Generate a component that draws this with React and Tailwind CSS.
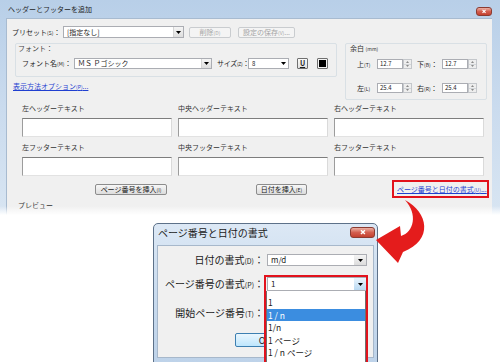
import React from "react";

const Accel = ({ k }) => <span className="text-[5px]">({k})</span>;

const Caret = () => (
  <svg width="5" height="3" viewBox="0 0 5 3">
    <path d="M0 0H5L2.5 3Z" fill="#000" />
  </svg>
);

const CloseButton = ({ className }) => (
  <div
    className={`flex items-center justify-center rounded-[3px] border border-[#8b3b31] bg-gradient-to-b from-[#eab0a4] via-[#d35e4f] to-[#c4402f] ${className}`}
  >
    <svg viewBox="0 0 10 8" className="h-[70%]">
      <path d="M2.5 1.5L7.5 6.5M7.5 1.5L2.5 6.5" stroke="#fff" strokeWidth="1.8" />
    </svg>
  </div>
);

const Button = ({ children, className, disabled }) => (
  <div
    className={`flex items-center justify-center rounded-[2px] border text-[7px] leading-none ${
      disabled
        ? "border-[#c9cccf] bg-[#f4f4f4] text-[#a5a5a5]"
        : "border-[#8c8c8c] bg-gradient-to-b from-[#f7f7f7] to-[#dcdcdc] text-[#1b1b1b]"
    } ${className}`}
  >
    {children}
  </div>
);

const Combo = ({ value, className, textClass = "text-[7px]", arrowClass = "" }) => (
  <div className={`flex items-stretch border border-[#abadb3] bg-white ${className}`}>
    <span className={`flex flex-1 items-center truncate pl-[3px] leading-none ${textClass}`}>
      {value}
    </span>
    <span className={`flex w-[10px] items-center justify-center ${arrowClass}`}>
      <Caret />
    </span>
  </div>
);

const Spinner = () => (
  <div className="flex h-[10px] w-[9px] flex-col border border-[#c4c7cb] bg-[#eeeeee]">
    <div className="flex flex-1 items-center justify-center border-b border-[#d3d6d9]">
      <svg width="3" height="2" viewBox="0 0 3 2">
        <path d="M0 2H3L1.5 0Z" fill="#8a8a8a" />
      </svg>
    </div>
    <div className="flex flex-1 items-center justify-center">
      <svg width="3" height="2" viewBox="0 0 3 2">
        <path d="M0 0H3L1.5 2Z" fill="#8a8a8a" />
      </svg>
    </div>
  </div>
);

const NumberField = ({ value }) => (
  <div className="flex items-center">
    <div className="flex h-[10px] w-[26px] items-center border border-[#abadb3] bg-white pl-[2px] text-[6px] leading-none">
      {value}
    </div>
    <Spinner />
  </div>
);

const TextField = ({ label }) => (
  <div className="flex w-[150px] flex-col">
    <span className="h-[9px] text-[7px] leading-[9px] text-[#333]">{label}</span>
    <div className="mt-[5px] h-[19px] border border-t-[#7d7d7d] border-l-[#9c9c9c] border-r-[#dadada] border-b-[#e2e2e2] bg-white" />
  </div>
);

const MainWindow = () => (
  <div className="relative h-[215px] w-[500px] bg-gradient-to-b from-[#b8cfe8] via-[#cadbee] to-[#d8e5f2]">
    <div className="flex h-[18px] items-start justify-between pl-[8px] pr-[8px]">
      <span className="mt-[5px] text-[7px] leading-[9px] text-[#1e1e1e]">
        ヘッダーとフッターを追加
      </span>
      <CloseButton className="mt-[7px] h-[9px] w-[16px]" />
    </div>

    <div className="ml-[6px] mr-[8px] flex h-[197px] flex-col bg-[#f0f0f0] text-[#1e1e1e] shadow-[inset_1px_1px_0_#a8bbd0]">
      {/* preset */}
      <div className="mt-[8px] flex h-[12px] items-center pl-[6px]">
        <span className="w-[51px] text-[7px] leading-none">
          プリセット<Accel k="S" />：
        </span>
        <Combo
          value="[指定なし]"
          className="h-[12px] w-[121px]"
          arrowClass="bg-gradient-to-b from-[#f5f5f5] to-[#dedede] border-l border-[#d5d5d5]"
        />
        <Button disabled className="ml-[5px] h-[11px] w-[42px]">
          削除<Accel k="D" />
        </Button>
        <Button disabled className="ml-[7px] h-[11px] w-[57px]">
          設定の保存<Accel k="V" />...
        </Button>
      </div>

      {/* font + margins */}
      <div className="mt-[5px] flex pl-[7px]">
        <div className="flex w-[324px] flex-col">
          <div className="ml-[2px] flex h-[34px] w-[322px] flex-col rounded-[2px] border border-[#d9e0e5]">
            <span className="ml-[2px] h-[9px] text-[7px] leading-[9px] text-[#444]">フォント：</span>
            <div className="mt-[5px] flex h-[11px] items-center pl-[6px]">
              <span className="w-[52px] text-[7px] leading-none">
                フォント名<Accel k="M" />：
              </span>
              <Combo
                value="ＭＳ Ｐゴシック"
                className="h-[11px] w-[138px]"
                arrowClass="bg-gradient-to-b from-[#f5f5f5] to-[#dedede] border-l border-[#d5d5d5]"
              />
              <span className="ml-[5px] w-[31px] text-[7px] leading-none tracking-[-0.3px]">
                サイズ<Accel k="Z" />：
              </span>
              <Combo value="8" className="h-[11px] w-[41px]" textClass="text-[6px]" />
              <div className="ml-[8px] flex h-[11px] w-[11px] items-center justify-center rounded-[1px] border border-[#707070] bg-gradient-to-b from-[#fafafa] to-[#e2e2e2] text-[7px] font-bold leading-none underline">
                U
              </div>
              <div className="ml-[9px] flex h-[11px] w-[11px] items-center justify-center rounded-[1px] border border-[#707070] bg-[#f3f3f3]">
                <div className="h-[7px] w-[7px] bg-black" />
              </div>
            </div>
          </div>
          <span className="mt-[5px] text-[7px] leading-[9px] text-[#1f3fd0] underline">
            表示方法オプション<Accel k="P" />...
          </span>
        </div>

        <div className="ml-[8px] flex h-[57px] w-[142px] flex-col rounded-[2px] border border-[#d9e0e5]">
          <span className="ml-[4px] h-[9px] text-[7px] leading-[9px] text-[#333]">
            余白 <span className="text-[5px]">(mm)</span>
          </span>
          <div className="mt-[6px] flex h-[10px] items-center pl-[11px]">
            <span className="w-[20px] text-[7px] leading-none">
              上<Accel k="T" />
            </span>
            <NumberField value="12.7" />
            <span className="ml-[5px] w-[25px] text-[7px] leading-none">
              下<Accel k="B" />：
            </span>
            <NumberField value="12.7" />
          </div>
          <div className="mt-[14px] flex h-[10px] items-center pl-[11px]">
            <span className="w-[20px] text-[7px] leading-none">
              左<Accel k="L" />
            </span>
            <NumberField value="25.4" />
            <span className="ml-[5px] w-[25px] text-[7px] leading-none">
              右<Accel k="R" />：
            </span>
            <NumberField value="25.4" />
          </div>
        </div>
      </div>

      {/* header / footer text */}
      <div className="mt-[4px] grid grid-cols-[150px_150px_150px] gap-x-[6px] gap-y-[6px] pl-[16px]">
        <TextField label="左ヘッダーテキスト" />
        <TextField label="中央ヘッダーテキスト" />
        <TextField label="右ヘッダーテキスト" />
        <TextField label="左フッターテキスト" />
        <TextField label="中央フッターテキスト" />
        <TextField label="右フッターテキスト" />
      </div>

      {/* insert buttons */}
      <div className="mt-[4px] flex h-[18px] items-center pl-[89px]">
        <Button className="h-[11px] w-[72px]">
          ページ番号を挿入<Accel k="I" />
        </Button>
        <Button className="ml-[89px] h-[11px] w-[51px]">
          日付を挿入<Accel k="E" />
        </Button>
        <div className="ml-[85px] flex h-[18px] w-[97px] items-center border-2 border-[#e2121c] pl-[3px]">
          <span className="text-[7px] leading-none text-[#1f3fd0] underline">
            ページ番号と日付の書式<Accel k="U" />...
          </span>
        </div>
      </div>

      <span className="ml-[12px] mt-[3px] text-[7px] leading-[9px] text-[#333]">プレビュー</span>
    </div>

    <div className="absolute inset-x-0 bottom-0 h-[9px] bg-gradient-to-b from-transparent to-white" />
  </div>
);

const LIST_ITEMS = ["1", "1 / n", "1/n", "1 ページ", "1 / n ページ"];

const PageFormatDialog = () => (
  <div className="ml-[153px] mt-[8px] flex h-[145px] w-[225px] flex-col rounded-t-[5px] border border-[#5d7189] bg-gradient-to-b from-[#dce8f5] via-[#c9dbee] to-[#bdd2e9]">
    <div className="relative h-[21px]">
      <span className="absolute left-[4px] top-[2px] text-[10px] leading-[13px] text-[#1a1a1a]">
        ページ番号と日付の書式
      </span>
      <CloseButton className="absolute left-[196px] top-[3px] h-[11px] w-[25px]" />
    </div>

    <div className="relative mx-[3px] h-[113px] border border-[#a7b8cb] bg-[#f0f0f0] text-[10px] text-[#1a1a1a]">
      <div className="mt-[8px] flex h-[12px] items-center">
        <span className="w-[106px] text-right leading-none">
          日付の書式<span className="text-[7px]">(D)</span>：
        </span>
        <Combo
          value="m/d"
          className="ml-[3px] h-[12px] w-[100px]"
          textClass="text-[8px]"
          arrowClass="w-[12px] bg-gradient-to-b from-[#f4f4f4] to-[#dcdcdc]"
        />
      </div>
      <div className="mt-[11px] flex h-[14px] items-center">
        <span className="w-[106px] text-right leading-none">
          ページ番号の書式<span className="text-[7px]">(P)</span>：
        </span>
        <Combo
          value="1"
          className="ml-[3px] h-[14px] w-[100px]"
          textClass="text-[8px]"
          arrowClass="w-[12px] bg-gradient-to-b from-[#eaf4fc] to-[#b9d9f2]"
        />
      </div>
      <div className="mt-[16px] flex h-[12px] items-center">
        <span className="w-[106px] text-right leading-none">
          開始ページ番号<span className="text-[7px]">(T)</span>：
        </span>
      </div>
      <div className="mt-[14px] flex h-[14px] pl-[77px]">
        <div className="flex h-[14px] w-[60px] items-center justify-center rounded-[2px] border border-[#3c7fb1] bg-gradient-to-b from-[#eaf6fd] to-[#bee6fd] text-[9px] leading-none">
          OK
        </div>
      </div>

      {/* open dropdown list, highlighted with a red box */}
      <div className="absolute left-[106px] top-[29px] h-[90px] w-[104px] border-2 border-[#e2121c]">
        <div className="mt-[14px] flex h-[80px] flex-col border border-t-0 border-[#6f6f6f] bg-white pt-[5px]">
          {LIST_ITEMS.map((item, i) => (
            <div
              key={item}
              className={`flex h-[12.5px] items-center pl-[1px] text-[8.5px] leading-none ${
                i === 1 ? "bg-[#3b8de0] text-white" : "text-[#1a1a1a]"
              }`}
            >
              {item}
            </div>
          ))}
        </div>
      </div>
    </div>
  </div>
);

export default function App() {
  return (
    <div className="relative h-[362px] w-[500px] overflow-hidden whitespace-nowrap bg-white font-['Noto_Sans_CJK_JP',sans-serif]">
      <MainWindow />
      <PageFormatDialog />
      <svg
        className="pointer-events-none absolute left-0 top-0"
        width="500"
        height="362"
        viewBox="0 0 500 362"
      >
        <path
          d="M405 200C428 212 434 240 403 252L398 263L376 240L400 226L401 236C414 232 418 214 405 200Z"
          fill="#e41c1c"
        />
      </svg>
    </div>
  );
}
